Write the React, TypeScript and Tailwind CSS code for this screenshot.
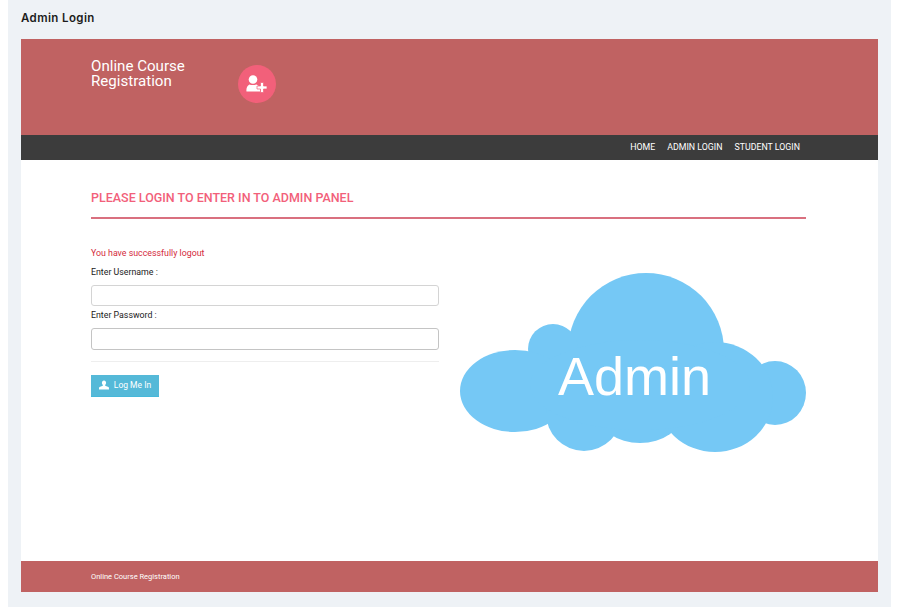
import React from "react";

function Cloud() {
  return (
    <svg width="346" height="180" viewBox="460 272 346 180" className="block">
      <g fill="#75c8f5">
        <circle cx="646" cy="351" r="78" />
        <circle cx="553" cy="349" r="25" />
        <ellipse cx="515" cy="391" rx="55" ry="41" />
        <ellipse cx="775" cy="393" rx="31" ry="32" />
        <ellipse cx="715" cy="397" rx="58" ry="55" />
        <circle cx="584" cy="413" r="38" />
        <ellipse cx="640" cy="413" rx="42" ry="30" />
        <ellipse cx="640" cy="385" rx="110" ry="45" />
      </g>
      <text x="558" y="395" fill="#ffffff" fontSize="54" fontFamily="'Liberation Sans', Arial, sans-serif">
        Admin
      </text>
    </svg>
  );
}

function UserPlus() {
  return (
    <svg width="22" height="18" viewBox="0 0 22 18" fill="#ffffff" className="-mt-[1px]">
      <circle cx="7" cy="4.500" r="4.300" />
      <path d="M0.500 16.500C0 14 1 10.500 3.500 9.500 5 10.300 9 10.300 10.500 9.500 12.500 10.200 13.500 12 14 14V16.500z" />
      <path
        d="M14.500 7.500h3v3.500H21v3h-3.500v3.500h-3V14H11v-3h3.500z"
        stroke="#f2607a"
        strokeWidth="0.700"
      />
    </svg>
  );
}

function UserSmall() {
  return (
    <svg width="10" height="10" viewBox="0 0 11 10" fill="#ffffff" className="-mt-[1px]">
      <path d="M5.500 0C4 0 3.200 1 3.200 2.600c0 1 .5 2 1 2.500v.7L.6 7.300C.1 7.600 0 8 0 10h11c0-2-.1-2.400-.6-2.700L6.800 5.800v-.7c.5-.5 1-1.500 1-2.500C7.800 1 7 0 5.500 0z" />
    </svg>
  );
}

export default function App() {
  return (
    <div className="bg-white w-[900px] h-[607px] pl-[8px] pr-[9px] font-['Roboto',sans-serif]">
      <div className="bg-[#eef2f6] h-full px-[13px] flex flex-col">
        <h1 className="h-[39px] pt-[10px] text-[11.500px] leading-[16px] font-semibold tracking-[0.4px] text-[#1c1c1c] font-['Inter',sans-serif]">
          Admin Login
        </h1>
        <div className="h-[553px] flex flex-col bg-white">
          <header className="h-[96px] bg-[#c06262] pl-[70px] flex items-start shrink-0">
            <div className="w-[147px] pt-[20px] text-[15.100px] leading-[15px] text-white">
              Online Course
              <br />
              Registration
            </div>
            <div className="mt-[26px] w-[38px] h-[38px] rounded-full bg-[#f2607a] flex items-center justify-center">
              <UserPlus />
            </div>
          </header>
          <nav className="h-[25px] bg-[#3c3c3c] shrink-0 flex items-center justify-end gap-[12px] pr-[78px] text-[8.800px] text-white">
            <span>HOME</span>
            <span>ADMIN LOGIN</span>
            <span>STUDENT LOGIN</span>
          </nav>
          <main className="flex-1 pl-[70px] pr-[72px]">
            <h2 className="mt-[30px] text-[12.500px] leading-[16px] font-medium text-[#f2607a]">
              PLEASE LOGIN TO ENTER IN TO ADMIN PANEL
            </h2>
            <div className="mt-[11px] h-[2px] bg-[#d9707f]" />
            <div className="mt-[27px] flex items-start justify-between">
              <form className="w-[348px]">
                <p className="text-[8.800px] leading-[14px] text-[#d42a3c]">You have successfully logout</p>
                <label className="block mt-[5px] text-[8.800px] leading-[14px] text-[#222222]">
                  Enter Username :
                </label>
                <div className="mt-[6px] h-[21px] rounded-[3px] border border-[#d4d4d4] bg-white" />
                <label className="block mt-[2px] text-[8.800px] leading-[14px] text-[#222222]">
                  Enter Password :
                </label>
                <div className="mt-[6px] h-[22px] rounded-[3px] border border-[#c4c4c4] bg-white" />
                <div className="mt-[11px] h-px bg-[#eeeeee]" />
                <button
                  type="button"
                  className="mt-[13px] w-[68px] h-[22px] bg-[#55b9d8] border-b border-[#46b8da] flex items-center justify-center gap-[5px] text-[8.500px] text-white"
                >
                  <UserSmall />
                  Log Me In
                </button>
              </form>
              <div className="mt-[26px]">
                <Cloud />
              </div>
            </div>
          </main>
          <footer className="h-[31px] bg-[#c06262] shrink-0 pl-[70px] flex items-center text-[7.500px] text-white">
            Online Course Registration
          </footer>
        </div>
      </div>
    </div>
  );
}
